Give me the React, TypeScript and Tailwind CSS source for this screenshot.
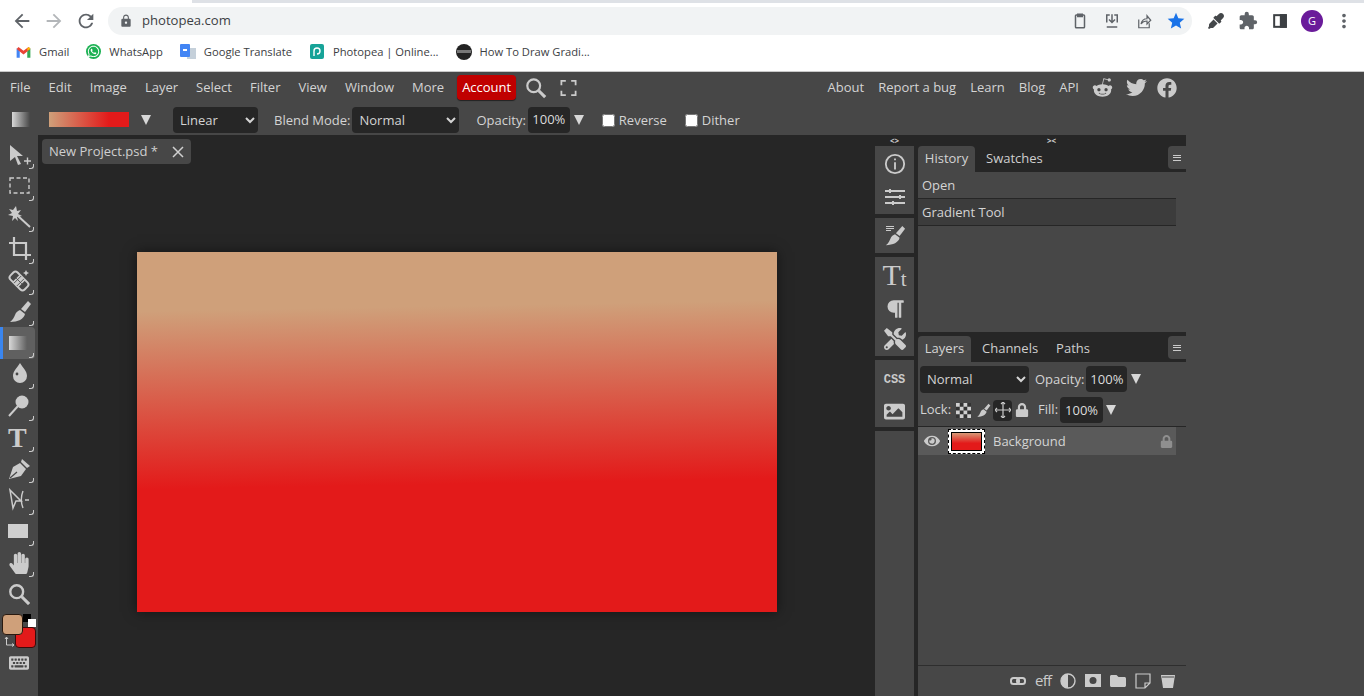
import type { ReactNode } from 'react';
import { FaFacebook, FaRedditAlien, FaTwitter, FaWhatsapp, FaLock, FaEye, FaFolder, FaParagraph, FaKeyboard, FaTools, FaImage, FaHandPaper, FaEyeDropper } from 'react-icons/fa';
import { MdArrowBack, MdArrowForward, MdExtension, MdLock, MdMoreVert, MdRefresh, MdStar } from 'react-icons/md';

const ICON = '#cbcbcb';

// ── small helpers ─────────────────────────────

function Svg({ size = 24, children, className }: { size?: number; children: ReactNode; className?: string }) {
  return (
    <svg width={size} height={size} viewBox="0 0 24 24" className={className} fill={ICON} stroke="none">
      {children}
    </svg>
  );
}

function BrushIcon({ size = 24, className }: { size?: number; className?: string }) {
  return (
    <Svg size={size} className={className}>
      <path d="M20 1l3 3-6 8-4-3z" />
      <path d="M12 10l5 4c-1 5-7 8-15 8 3-2 4-5 5-7 1-3 3-4 5-5z" />
    </Svg>
  );
}

function Tool({ children, active, corner = true }: { children: ReactNode; active?: boolean; corner?: boolean }) {
  return (
    <div className={`relative h-[31.4px] w-[35px] flex items-center ${active ? 'bg-[#606060] rounded-r border-l-[3px] border-[#3a86f0] pl-[6px]' : 'pl-[8px]'}`}>
      {children}
      {corner && <span className="absolute right-[1px] bottom-[1px] w-[5px] h-[5px] border-r border-b border-[#cbcbcb] rounded-br-[3px]" />}
    </div>
  );
}

function Triangle({ className = '' }: { className?: string }) {
  return <span className={`block w-0 h-0 border-x-[5px] border-x-transparent border-t-[10px] border-t-[#d8d8d8] ${className}`} />;
}

// text sits 1px below the centre of its row in the reference
function Label({ children, className = '' }: { children: ReactNode; className?: string }) {
  return <span className={`pt-[2px] ${className}`}>{children}</span>;
}

function NumBox({ className }: { className: string }) {
  return <span className={`bg-[#262626] rounded h-[26px] pt-[1px] flex items-center justify-center text-[#dcdcdc] ${className}`}>100%</span>;
}

function Select({ value, className }: { value: string; className: string }) {
  return (
    <select defaultValue={value} className={`bg-[#262626] text-[#d4d4d4] rounded h-[26px] pl-[3px] outline-none ${className}`}>
      <option>{value}</option>
    </select>
  );
}

function Bookmark({ icon, label, className }: { icon: ReactNode; label: string; className: string }) {
  return (
    <div className={`flex items-center ${className}`}>
      <span className="w-[16px] h-[16px] flex items-center justify-center">{icon}</span>
      <span className="ml-[8px] text-[11.2px] text-[#3c4043] whitespace-nowrap">{label}</span>
    </div>
  );
}

// ── browser chrome ────────────────────────────

function BrowserBar() {
  return (
    <div className="h-[72px] bg-white border-b border-[#c8c8c8] flex flex-col">
      <div className="h-[3px] flex">
        <div className="w-[192px] bg-white" />
        <div className="flex-1 bg-[#dee1e6]" />
      </div>
      <div className="h-[28px] mt-[4px] flex items-center">
        <div className="w-[108px] flex items-center pl-[11px] gap-[10px] text-[#5f6368]">
          <MdArrowBack size={22} />
          <MdArrowForward size={22} className="text-[#b3b6b9]" />
          <MdRefresh size={22} />
        </div>
        <div className="w-[1084px] h-[28px] rounded-full bg-[#f1f3f4] flex items-center pl-[11px] pr-[6px]">
          <MdLock size={14} className="text-[#5f6368]" />
          <span className="ml-[9px] text-[13.1px] text-[#3c4043]">photopea.com</span>
          <div className="ml-auto flex items-center gap-[14px] text-[#5f6368]">
            <svg width="18" height="18" viewBox="0 0 24 24" fill="none" stroke="#5f6368" strokeWidth="2"><rect x="6" y="4" width="12" height="17" rx="1" /><path d="M9 3h6v3H9z" fill="#5f6368" /></svg>
            <svg width="18" height="18" viewBox="0 0 24 24" fill="none" stroke="#5f6368" strokeWidth="2"><path d="M5 14V4h4M19 14V4h-4M5 20h14" /><path d="M12 3v11M8 10l4 4 4-4" /></svg>
            <svg width="18" height="18" viewBox="0 0 24 24" fill="none" stroke="#5f6368" strokeWidth="1.6"><path d="M5 10v11h14v-6" /><path d="M8 16c1-5 4-7 8-7V5l5 6-5 5v-4c-3 0-6 1-8 4z" /></svg>
            <MdStar size={20} className="text-[#1a73e8] -ml-[1px]" />
          </div>
        </div>
        <div className="flex items-center text-[#5f6368] ml-[16px]">
          <FaEyeDropper size={16} className="text-[#44474a]" />
          <MdExtension size={20} className="ml-[14px]" />
          <svg width="20" height="20" viewBox="0 0 24 24" fill="none" stroke="#3c4043" strokeWidth="2.4" className="ml-[12px]"><rect x="5" y="5" width="14" height="14" /><rect x="13" y="5" width="6" height="14" fill="#3c4043" /></svg>
          <span className="ml-[11px] w-[22px] h-[22px] rounded-full bg-[#6a1b9a] text-white text-[11px] flex items-center justify-center">G</span>
          <MdMoreVert size={22} className="ml-[10px]" />
        </div>
      </div>
      <div className="h-[36px] flex items-center -mt-[1px]">
        <Bookmark className="ml-[15px]" label="Gmail" icon={
          <svg width="15" height="12" viewBox="0 0 24 18"><path d="M1 18V3l5 4v11z" fill="#4285f4" /><path d="M23 18V3l-5 4v11z" fill="#34a853" /><path d="M1 4 4 1l8 6 8-6 3 3-11 9z" fill="#ea4335" /><path d="M18 7l5-3-2-3-3 2z" fill="#fbbc04" /></svg>
        } />
        <Bookmark className="ml-[16px]" label="WhatsApp" icon={
          <span className="w-[15px] h-[15px] rounded-full bg-[#1bb152] text-white flex items-center justify-center"><FaWhatsapp size={13} /></span>
        } />
        <Bookmark className="ml-[17px]" label="Google Translate" icon={
          <svg width="16" height="16" viewBox="0 0 16 16"><rect x="7" y="4" width="9" height="11" fill="#c5d0da" /><rect x="0" y="0" width="10" height="13" rx="1" fill="#4285f4" /><rect x="3" y="5" width="4" height="2" fill="#fff" /></svg>
        } />
        <Bookmark className="ml-[17px]" label="Photopea | Online..." icon={
          <svg width="14" height="15" viewBox="0 0 14 15"><rect width="14" height="15" rx="2" fill="#17a398" /><path d="M4 12V7a3 3 0 1 1 3 3" fill="none" stroke="#fff" strokeWidth="1.4" /></svg>
        } />
        <Bookmark className="ml-[17px]" label="How To Draw Gradi..." icon={
          <svg width="16" height="16" viewBox="0 0 16 16"><circle cx="8" cy="8" r="8" fill="#222" /><rect x="1" y="6" width="14" height="3" fill="#777" /></svg>
        } />
      </div>
    </div>
  );
}

// ── photopea top bars ─────────────────────────

const MENU = ['File', 'Edit', 'Image', 'Layer', 'Select', 'Filter', 'View', 'Window', 'More'];
const LINKS = ['About', 'Report a bug', 'Learn', 'Blog', 'API'];

function MenuBar() {
  return (
    <div className="h-[32px] pb-[1px] flex items-center text-[13px] text-[#d4d4d4] w-[1186px]">
      <div className="flex items-center gap-[18px] pl-[10px]">
        {MENU.map((m) => <span key={m}>{m}</span>)}
      </div>
      <span className="ml-[13px] h-[25px] px-[5px] flex items-center rounded bg-[#c00000] text-white shadow-[0_1px_1px_#222]">Account</span>
      <svg width="22" height="22" viewBox="0 0 24 24" fill="none" stroke={ICON} strokeWidth="2.4" className="ml-[9px]">
        <circle cx="9.5" cy="9.5" r="7" /><path d="M15 15l7 7" strokeWidth="3.4" />
      </svg>
      <svg width="17" height="16" viewBox="0 0 18 18" fill="none" stroke={ICON} strokeWidth="2" className="ml-[13px]">
        <path d="M1 6V1h5M12 1h5v5M17 12v5h-5M6 17H1v-5" />
      </svg>
      <div className="ml-auto flex items-center pr-[9px]">
        <div className="flex items-center gap-[14px]">
          {LINKS.map((l) => <span key={l}>{l}</span>)}
        </div>
        <FaRedditAlien size={21} color={ICON} className="ml-[13px]" />
        <FaTwitter size={21} color={ICON} className="ml-[13px]" />
        <FaFacebook size={20} color={ICON} className="ml-[10px]" />
      </div>
    </div>
  );
}

function OptionsBar() {
  return (
    <div className="h-[31px] flex items-center text-[13px] text-[#d4d4d4]">
      <div className="ml-[12px] w-[18px] h-[15px] bg-[linear-gradient(to_right,#d8d8d8,#474747)]" />
      <div className="ml-[19px] w-[80px] h-[15px] bg-[linear-gradient(to_right,#cfa07a,#e31a1a_75%)]" />
      <Triangle className="ml-[12px]" />
      <Select value="Linear" className="ml-[22px] w-[85px]" />
      <Label className="ml-[16px]">Blend Mode:</Label>
      <Select value="Normal" className="ml-[2px] w-[107px]" />
      <Label className="ml-[17px]">Opacity:</Label>
      <NumBox className="ml-[2px] w-[42px]" />
      <Triangle className="ml-[4px]" />
      <input type="checkbox" className="ml-[18px] w-[13px] h-[13px] mt-[1px]" />
      <Label className="ml-[4px]">Reverse</Label>
      <input type="checkbox" className="ml-[18px] w-[13px] h-[13px] mt-[1px]" />
      <Label className="ml-[4px]">Dither</Label>
    </div>
  );
}

// ── left tools ────────────────────────────────

function ToolBar() {
  return (
    <div className="w-[38px] bg-[#474747] flex flex-col pt-[4px] relative">
      <Tool><Svg><path d="M2 2l13 11H9l4 8-3 1-3-8-5 4z" /><path d="M16 18h7M19.5 14.5v7" stroke={ICON} strokeWidth="1.4" /></Svg></Tool>
      <Tool><Svg><rect x="2" y="4" width="19" height="15" fill="none" stroke={ICON} strokeWidth="1.4" strokeDasharray="4 2.5" /></Svg></Tool>
      <Tool><Svg><path d="M8 1l1 5 4-1-3 4 4 2-5 1 1 4-3-3-3 3 1-5-5-1 4-2-3-4 4 1z" /><path d="M10 11l12 11" stroke={ICON} strokeWidth="2" /></Svg></Tool>
      <Tool><Svg><path d="M1 6h17v17M6 0v18h17" fill="none" stroke={ICON} strokeWidth="2.2" /></Svg></Tool>
      <Tool><Svg><g transform="rotate(45 11 13)"><rect x="1" y="8" width="20" height="10" rx="3" fill="none" stroke={ICON} strokeWidth="2" /><rect x="7" y="8" width="8" height="10" /><path d="M9 8v10M13 8v10M7 13h8" stroke="#474747" strokeWidth=".8" /></g><path d="M18 2l1 2 2 1-2 1-1 2-1-2-2-1 2-1z" /></Svg></Tool>
      <Tool><BrushIcon /></Tool>
      <Tool active><div className="w-[18px] h-[14px] bg-[linear-gradient(to_right,#d8d8d8,#606060)]" /></Tool>
      <Tool><Svg><path d="M12 1c3 5 7 8 7 13a7 7 0 0 1-14 0c0-5 4-8 7-13z" /><circle cx="9" cy="12" r="1.4" fill="#474747" /></Svg></Tool>
      <Tool><Svg><circle cx="14" cy="8" r="6.5" /><path d="M10 12L1 22" stroke={ICON} strokeWidth="2" /></Svg></Tool>
      <Tool><span className="font-['Liberation_Serif',serif] font-bold text-[28px] leading-none text-[#cbcbcb] mt-[1px]">T</span></Tool>
      <Tool><Svg><path d="M14 2l8 7-3 2-6-6z" /><path d="M12 6l-7 4-4 12 12-3 5-7z" /><path d="M2 21l7-6" stroke="#474747" strokeWidth="1.2" /></Svg></Tool>
      <Tool><Svg><path d="M2 2l11 11H8l-3 7z" fill="none" stroke={ICON} strokeWidth="1.5" /><path d="M15 3c-2 5-2 12 0 17M17 12h4" fill="none" stroke={ICON} strokeWidth="1.4" /></Svg></Tool>
      <Tool><div className="w-[20px] h-[14px] bg-[#cfcfcf]" /></Tool>
      <Tool><FaHandPaper size={22} color={ICON} /></Tool>
      <Tool corner={false}><svg width="22" height="22" viewBox="0 0 24 24" fill="none" stroke={ICON} strokeWidth="2.6"><circle cx="9.5" cy="9.5" r="7" /><path d="M15 15l8 8" strokeWidth="3.4" /></svg></Tool>
      {/* foreground / background colour chips */}
      <div className="relative h-[36px] w-[38px] mt-[4.5px]">
        <span className="absolute left-[15px] top-[13px] w-[21px] h-[21px] rounded-[4px] bg-[#e31a1a] border border-[#3b0b0b]" />
        <span className="absolute left-[2px] top-[0px] w-[21px] h-[21px] rounded-[4px] bg-[#cfa07a] border border-[#2a1a10]" />
        <span className="absolute left-[23px] top-0 w-[8px] h-[8px] bg-black" />
        <span className="absolute left-[28px] top-[5px] w-[8px] h-[8px] bg-white" />
        <svg width="11" height="11" viewBox="0 0 11 11" fill="none" stroke={ICON} className="absolute left-[4px] top-[22px]"><path d="M2.500 9V1M1 3l1.500-2L4 3M2.500 9H10M8 7.500l2 1.500-2 1.500" /></svg>
      </div>
      <div className="pl-[9px] mt-[3px]"><FaKeyboard size={20} color={ICON} /></div>
    </div>
  );
}

// ── right panels ──────────────────────────────

function Divider() {
  return <div className="h-[4px] bg-[#262626]" />;
}

function IconColumn() {
  return (
    <div className="w-[39px] flex flex-col items-stretch">
      <div className="h-[68px] bg-[#474747] flex flex-col items-center justify-around pb-[2px]">
        <svg width="22" height="22" viewBox="0 0 24 24" fill="none" stroke={ICON} strokeWidth="2"><circle cx="12" cy="12" r="10" /><path d="M12 10v8M12 6v2" /></svg>
        <svg width="22" height="18" viewBox="0 0 22 18" fill="none" stroke={ICON} strokeWidth="2"><path d="M1 3h20M1 9h20M1 15h20" /><path d="M6 1v4M16 7v4M9 13v4" /></svg>
      </div>
      <Divider />
      <div className="h-[35px] bg-[#474747] flex items-center justify-center relative">
        <BrushIcon size={22} />
        <span className="absolute left-[11px] top-[8px] flex flex-col gap-[1px]">
          <i className="w-[8px] h-[1px] bg-[#cbcbcb]" /><i className="w-[8px] h-[1px] bg-[#cbcbcb]" /><i className="w-[5px] h-[1px] bg-[#cbcbcb]" />
        </span>
      </div>
      <Divider />
      <div className="h-[99px] bg-[#474747] flex flex-col items-center justify-around pb-[2px]">
        <span className="font-['Liberation_Serif',serif] leading-none text-[#cbcbcb] flex items-end -mt-[2px]">
          <span className="text-[30px] leading-none">T</span>
          <span className="text-[21px] leading-none">t</span>
        </span>
        <FaParagraph size={20} color={ICON} />
        <FaTools size={22} color={ICON} />
      </div>
      <Divider />
      <div className="h-[67px] bg-[#474747] flex flex-col items-center justify-center gap-[15px] pt-[9px]">
        <span className="text-[12px] font-bold text-[#cbcbcb] leading-none font-['Liberation_Mono',monospace]">CSS</span>
        <FaImage size={21} color={ICON} />
      </div>
      <Divider />
      <div className="flex-1 bg-[#474747]" />
    </div>
  );
}

function PanelTabs({ tabs, activeWidth }: { tabs: { label: string; gap: string }[]; activeWidth: string }) {
  return (
    <div className="h-[26px] bg-[#262626] flex relative text-[13px]">
      <span className={`bg-[#474747] rounded-t flex items-center justify-center text-[#d4d4d4] ${activeWidth}`}>{tabs[0].label}</span>
      {tabs.slice(1).map((t) => (
        <span key={t.label} className={`flex items-center text-[#cfcfcf] ${t.gap}`}>{t.label}</span>
      ))}
      <span className="absolute right-0 top-0 w-[18px] h-[23px] bg-[#474747] rounded-l flex flex-col items-center justify-center gap-[1.5px]">
        <i className="w-[8px] h-[1px] bg-[#cbcbcb]" /><i className="w-[8px] h-[1px] bg-[#cbcbcb]" /><i className="w-[8px] h-[1px] bg-[#cbcbcb]" />
      </span>
    </div>
  );
}

function HistoryPanel() {
  return (
    <div className="h-[186px] bg-[#474747] flex flex-col">
      <PanelTabs tabs={[{ label: 'History', gap: '' }, { label: 'Swatches', gap: 'ml-[11px]' }]} activeWidth="w-[57px]" />
      <div className="h-[26px] pl-[4px] pt-[2px] flex items-center">Open</div>
      <div className="h-[28px] w-[258px] pl-[4px] pt-[2px] flex items-center bg-[#3c3c3c] border-y border-[#262626]">Gradient Tool</div>
    </div>
  );
}

function LayersPanel() {
  return (
    <div className="flex-1 bg-[#474747] flex flex-col">
      <PanelTabs tabs={[{ label: 'Layers', gap: '' }, { label: 'Channels', gap: 'ml-[11px]' }, { label: 'Paths', gap: 'ml-[18px]' }]} activeWidth="w-[53px]" />
      <div className="h-[34px] flex items-center pl-[2px]">
        <Select value="Normal" className="w-[109px] h-[27px]" />
        <Label className="ml-[6px]">Opacity:</Label>
        <NumBox className="ml-[2px] w-[41px]" />
        <Triangle className="ml-[4px]" />
      </div>
      <div className="h-[28px] flex items-center pl-[2px]">
        <span>Lock:</span>
        <svg width="15" height="15" viewBox="0 0 4 4" className="ml-[5px]"><rect width="4" height="4" fill="#d0d0d0" /><path d="M1 0h1v1H1zM3 0h1v1H3zM0 1h1v1H0zM2 1h1v1H2zM1 2h1v1H1zM3 2h1v1H3zM0 3h1v1H0zM2 3h1v1H2z" fill="#333" /></svg>
        <BrushIcon size={15} className="ml-[5px]" />
        <span className="ml-[2px] w-[19px] h-[21px] bg-[#262626] rounded flex items-center justify-center">
          <svg width="16" height="16" viewBox="0 0 16 16" fill="none" stroke={ICON} strokeWidth="1.2"><path d="M8 0v16M0 8h16" /><path d="M6 2l2-2 2 2M6 14l2 2 2-2M2 6L0 8l2 2M14 6l2 2-2 2" /></svg>
        </span>
        <FaLock size={14} color={ICON} className="ml-[3px]" />
        <span className="ml-[9px]">Fill:</span>
        <NumBox className="ml-[2px] w-[43px]" />
        <Triangle className="ml-[3px]" />
      </div>
      <div className="h-[1px] bg-[#262626] mt-[2px]" />
      <div className="h-[28px] w-[258px] bg-[#5a5a5a] flex items-center">
        <FaEye size={16} color={ICON} className="ml-[6px]" />
        <div className="ml-[8px] w-[37px] h-[25px] p-[2px] bg-white border border-dashed border-black">
          <div className="w-full h-full border border-black bg-[linear-gradient(to_bottom,#d89a78,#e31a1a_60%)]" />
        </div>
        <Label className="ml-[8px]">Background</Label>
        <FaLock size={13} color="#8f8f8f" className="ml-auto mr-[3px]" />
      </div>
      <div className="mt-auto h-[31px] border-t border-[#2e2e2e] flex items-center justify-end gap-[9px] pr-[10px] pb-[1px]">
        <svg width="16" height="16" viewBox="0 0 16 16" fill="none" stroke={ICON} strokeWidth="2"><rect x="1" y="5" width="8" height="6" rx="2.5" /><rect x="7" y="5" width="8" height="6" rx="2.5" /></svg>
        <span className="w-[16px] text-[15px] text-[#cbcbcb] tracking-tighter leading-none">eff</span>
        <svg width="16" height="16" viewBox="0 0 16 16"><circle cx="8" cy="8" r="7" fill="none" stroke={ICON} strokeWidth="1.4" /><path d="M8 1a7 7 0 0 0 0 14z" fill={ICON} /></svg>
        <svg width="16" height="13" viewBox="0 0 16 13"><rect width="16" height="13" fill={ICON} /><circle cx="8" cy="6.500" r="3.500" fill="#474747" /></svg>
        <FaFolder size={16} color={ICON} />
        <svg width="16" height="16" viewBox="0 0 16 16" fill="none" stroke={ICON} strokeWidth="1.2"><path d="M1 1h14v9l-5 5H1zM15 10h-5v5" /></svg>
        <svg width="16" height="16" viewBox="0 0 16 16"><path d="M1 2h14l-2 13H3z" fill={ICON} /><path d="M2 4h12" stroke="#474747" /></svg>
      </div>
    </div>
  );
}

function RightDock() {
  return (
    <div className="w-[311px] bg-[#262626] flex flex-col">
      <div className="h-[11px] flex text-[8px] leading-[12px] text-[#cbcbcb] font-bold">
        <span className="w-[39px] text-center">&lt;&gt;</span>
        <span className="flex-1 pl-[133px]">&gt;&lt;</span>
      </div>
      <div className="flex-1 flex text-[13px] text-[#d4d4d4]">
        <IconColumn />
        <div className="w-[268px] ml-[4px] flex flex-col">
          <HistoryPanel />
          <div className="h-[4px] bg-[#262626]" />
          <LayersPanel />
        </div>
      </div>
    </div>
  );
}

export default function App() {
  return (
    <div className="w-[1364px] h-[696px] overflow-hidden flex flex-col bg-[#474747] font-['Open_Sans',sans-serif]">
      <BrowserBar />
      <MenuBar />
      <OptionsBar />
      <div className="flex-1 flex min-h-0">
        <ToolBar />
        <div className="w-[837px] bg-[#262626] flex flex-col">
          <div className="h-[33px] pl-[4px] pt-[4px] shrink-0">
            <div className="w-[149px] h-[25px] bg-[#474747] rounded flex items-center pl-[7px] text-[13px] text-[#cfcfcf]">
              New Project.psd *
              <svg width="12" height="12" viewBox="0 0 12 12" stroke="#d0d0d0" strokeWidth="1.5" className="ml-[14px]"><path d="M1 1l10 10M11 1L1 11" /></svg>
            </div>
          </div>
          <div className="flex-1 flex items-center justify-center">
            <div className="w-[640px] h-[360px] shadow-[0_0_12px_rgba(0,0,0,0.5)] bg-[linear-gradient(179deg,#cfa07a_16%,#e31a1a_64%)]" />
          </div>
        </div>
        <RightDock />
      </div>
    </div>
  );
}
